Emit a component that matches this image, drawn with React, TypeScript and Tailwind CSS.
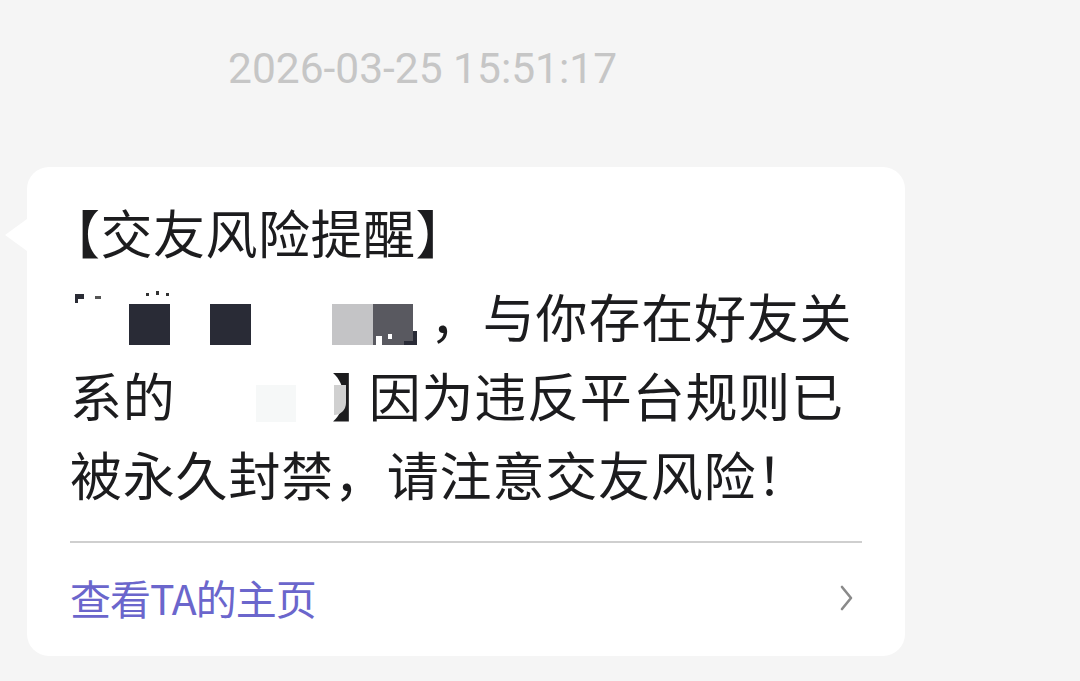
import React from "react";

const cjk = { fontFamily: '"Noto Sans CJK SC", "Noto Sans", sans-serif' };

export default function App() {
  return (
    <div className="w-[1080px] h-[681px] bg-[#f5f5f5] overflow-hidden relative" style={cjk}>
      <div className="pt-[42px] pl-[228px] h-[167px]">
        <div
          className="text-[42.5px] leading-[54px] text-[#c6c6c6]"
          style={{ fontFamily: 'Roboto, "Noto Sans", sans-serif' }}
        >
          2026-03-25 15:51:17
        </div>
      </div>
      <div className="relative ml-[27px] w-[878px] h-[489px] bg-white rounded-[22px] px-[43px] flex flex-col">
        {/* tail */}
        <div className="absolute left-[-22px] top-[52px] w-0 h-0 border-t-[16px] border-b-[16px] border-r-[22px] border-t-transparent border-b-transparent border-r-white" />
        <div className="pt-[35px] text-[52px] leading-[60px] text-[#1c1c1e] -ml-[22px] tracking-[0.5px]">【交友风险提醒】</div>
        <div className="mt-[14px] text-[52px] leading-[79px] text-[#1c1c1e] tracking-[0.8px]">
          <div className="flex">
            <span className="relative inline-block w-[360px] h-[79px]">
              <span className="absolute left-[5px] top-[18px] w-[9px] h-[5px] bg-[#2a2c35]" />
              <span className="absolute left-[5px] top-[18px] w-[3px] h-[9px] bg-[#2a2c35]" />
              <span className="absolute left-[25px] top-[20px] w-[6px] h-[3px] bg-[#555]" />
              <span className="absolute left-[76px] top-[17px] w-[3px] h-[3px] bg-[#333]" />
              <span className="absolute left-[86px] top-[15px] w-[3px] h-[4px] bg-[#333]" />
              <span className="absolute left-[96px] top-[17px] w-[3px] h-[3px] bg-[#333]" />
              <span className="absolute left-[59px] top-[28px] w-[41px] h-[41px] bg-[#292b36]" />
              <span className="absolute left-[140px] top-[28px] w-[41px] h-[41px] bg-[#292b36]" />
              <span className="absolute left-[262px] top-[28px] w-[41px] h-[41px] bg-[#c4c4c6]" />
              <span className="absolute left-[303px] top-[28px] w-[40px] h-[41px] bg-[#595960]" />
              <span className="absolute left-[306px] top-[60px] w-[6px] h-[9px] bg-white" />
              <span className="absolute left-[318px] top-[58px] w-[4px] h-[5px] bg-white" />
              <span className="absolute left-[343px] top-[55px] w-[4px] h-[14px] bg-[#292b36]" />
              <span className="absolute left-[334px] top-[65px] w-[13px] h-[4px] bg-[#292b36]" />
            </span>
            <span>，与你存在好友关</span>
          </div>
          <div className="flex">
            <span>系的</span>
            <span className="relative inline-block w-[157px] h-[79px]">
              <span className="absolute left-[80px] top-[30px] w-[40px] h-[37px] bg-[#f6f8f8]" />
              <span className="absolute left-[158px] top-[30px] w-[12px] h-[30px] bg-[#d0d0d0] rounded-br-[12px]" />
            </span>
            <span className="-ml-[1px] tracking-[-15px]">】</span>
            <span>因为违反平台规则已</span>
          </div>
          <div>被永久封禁，请注意交友风险！</div>
        </div>
        <div className="mt-[28px] h-[2px] bg-[#cfcfcf]" />
        <div className="flex-1 flex items-center justify-between pb-[4px]">
          <span className="text-[41px] text-[#6b66cc] tracking-[-1px]">查看TA的主页</span>
          <svg width="18" height="28" viewBox="0 0 18 28" className="mr-[6px]">
            <path d="M4 3 L13 14 L4 25" fill="none" stroke="#8a8a8a" strokeWidth="2.6" strokeLinecap="round" strokeLinejoin="round" />
          </svg>
        </div>
      </div>
    </div>
  );
}
